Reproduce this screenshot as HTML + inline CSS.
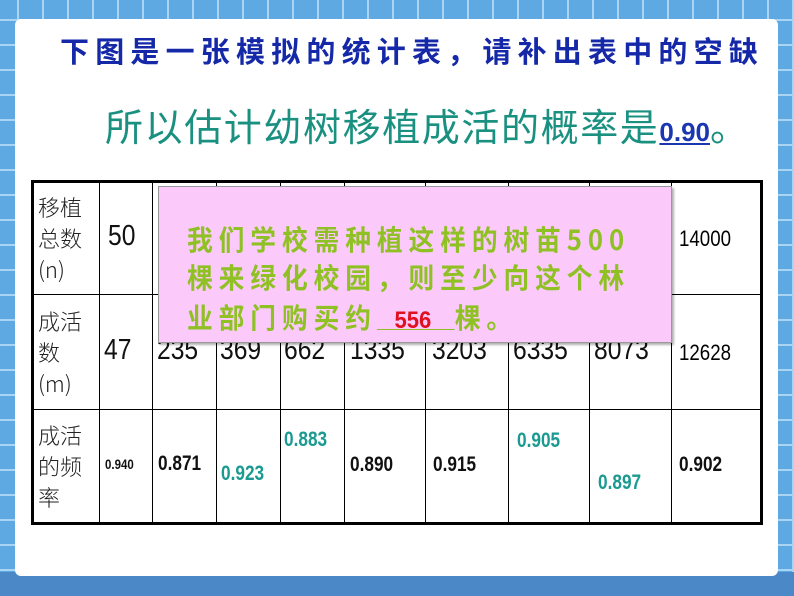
<!DOCTYPE html>
<html><head><meta charset="utf-8"><style>
*{margin:0;padding:0;box-sizing:border-box}
body{width:794px;height:596px;overflow:hidden;position:relative;font-family:"Liberation Sans","Noto Sans CJK SC",sans-serif;
background-color:#5ea9e2;
background-image:linear-gradient(#a9d4f3 2px,transparent 2px),linear-gradient(90deg,#a9d4f3 2px,transparent 2px);
background-size:25px 25px;background-position:-8px -6px}
.bot{position:absolute;left:0;top:572px;width:794px;height:24px;background:#4a88c8}
.card{position:absolute;left:15px;top:19px;width:763px;height:557px;background:#fff;border-radius:6px}
.a{position:absolute;white-space:nowrap}
.t1{left:60px;top:32px;font-size:29px;font-weight:bold;color:#1428a8;letter-spacing:6.2px;font-family:"Noto Sans CJK SC",sans-serif;line-height:36px}
.t2{left:105px;top:104px;font-size:38px;color:#1a9080;letter-spacing:1.6px;line-height:50px}
.t2 b{font-size:26px;color:#1a36b0;text-decoration:underline;letter-spacing:0}
table{position:absolute;left:31px;top:180px;border-collapse:collapse;border:3px solid #000}
td{border:1px solid #000;padding:0}
.cj{font-size:22px;color:#222;line-height:31px;padding-left:4px;font-family:"Noto Sans CJK SC",sans-serif;font-weight:300}
.n{font-size:29px;color:#111;transform:scaleX(.85);transform-origin:left}
.f{font-weight:bold;font-size:21px;color:#111;transform:scaleX(.82);transform-origin:left}
.g{font-weight:bold;font-size:21px;color:#1a9a90;transform:scaleX(.82);transform-origin:left}
.pink{position:absolute;left:158px;top:186px;width:514px;height:157px;background:#fccafa;border:1px solid #999;box-shadow:2px 2px 2px rgba(0,0,0,.3)}
.pt{position:absolute;left:28px;font-size:28px;font-weight:bold;color:#8fc024;letter-spacing:6.4px;font-family:"Noto Sans CJK SC",sans-serif;line-height:30px;transform:scaleX(.92);transform-origin:left}
</style></head><body>
<div class="bot"></div>
<div class="card"></div>
<div class="a t1">下图是一张模拟的统计表，请补出表中的空缺</div>
<div class="a t2">所以估计幼树移植成活的概率是<b>0.90</b>。</div>
<table>
<tr style="height:113px"><td style="width:67px" class="cj">移植<br>总数<br>(n)</td><td style="width:53px"></td><td style="width:64px"></td><td style="width:64px"></td><td style="width:64px"></td><td style="width:81px"></td><td style="width:83px"></td><td style="width:81px"></td><td style="width:82px"></td><td style="width:90px"></td></tr>
<tr style="height:115px"><td class="cj">成活<br>数<br>(m)</td><td></td><td></td><td></td><td></td><td></td><td></td><td></td><td></td><td></td></tr>
<tr style="height:114px"><td class="cj">成活<br>的频<br>率</td><td></td><td></td><td></td><td></td><td></td><td></td><td></td><td></td><td></td></tr>
</table>
<div class="a n" style="left:108px;top:220px">50</div>
<div class="a" style="left:679px;top:226px;font-size:22px;transform:scaleX(.85);transform-origin:left">14000</div>
<div class="a n" style="left:104px;top:334px">47</div>
<div class="a n" style="left:157px;top:334px">235</div>
<div class="a n" style="left:220px;top:334px">369</div>
<div class="a n" style="left:284px;top:334px">662</div>
<div class="a n" style="left:350px;top:334px">1335</div>
<div class="a n" style="left:432px;top:334px">3203</div>
<div class="a n" style="left:513px;top:334px">6335</div>
<div class="a n" style="left:594px;top:334px">8073</div>
<div class="a" style="left:679px;top:340px;font-size:22px;transform:scaleX(.85);transform-origin:left">12628</div>
<div class="a f" style="left:105px;top:456px;font-size:14px">0.940</div>
<div class="a f" style="left:158px;top:452px">0.871</div>
<div class="a g" style="left:221px;top:462px">0.923</div>
<div class="a g" style="left:284px;top:428px">0.883</div>
<div class="a f" style="left:350px;top:453px">0.890</div>
<div class="a f" style="left:433px;top:453px">0.915</div>
<div class="a g" style="left:517px;top:429px">0.905</div>
<div class="a g" style="left:598px;top:471px">0.897</div>
<div class="a f" style="left:679px;top:453px">0.902</div>
<div class="pink">
<div class="a pt" style="top:37px">我们学校需种植这样的树苗500</div>
<div class="a pt" style="top:75px">棵来绿化校园，则至少向这个林</div>
<div class="a pt" style="top:115px">业部门购买约<span style="text-decoration:underline;text-decoration-thickness:1px;letter-spacing:0">&nbsp;&nbsp;&nbsp;<span style="color:#e01020;font-size:24px;font-family:'Liberation Sans',sans-serif">556</span>&nbsp;&nbsp;&nbsp;&nbsp;</span>棵。</div>
</div>
</body></html>
